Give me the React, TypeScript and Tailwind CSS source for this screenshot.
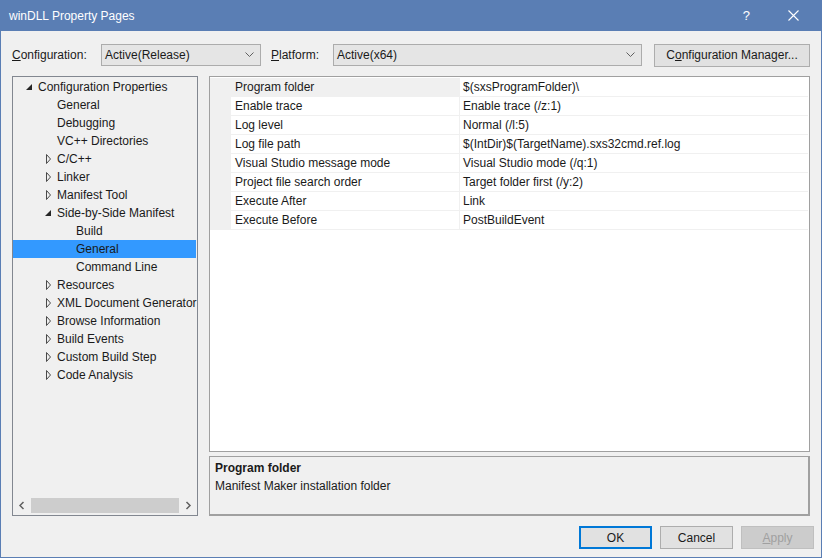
import { ReactNode } from "react";

type TreeNode = {
  label: string;
  level: number;
  arrow?: "open" | "closed";
  selected?: boolean;
};

const treeNodes: TreeNode[] = [
  { label: "Configuration Properties", level: 0, arrow: "open" },
  { label: "General", level: 1 },
  { label: "Debugging", level: 1 },
  { label: "VC++ Directories", level: 1 },
  { label: "C/C++", level: 1, arrow: "closed" },
  { label: "Linker", level: 1, arrow: "closed" },
  { label: "Manifest Tool", level: 1, arrow: "closed" },
  { label: "Side-by-Side Manifest", level: 1, arrow: "open" },
  { label: "Build", level: 2 },
  { label: "General", level: 2, selected: true },
  { label: "Command Line", level: 2 },
  { label: "Resources", level: 1, arrow: "closed" },
  { label: "XML Document Generator", level: 1, arrow: "closed" },
  { label: "Browse Information", level: 1, arrow: "closed" },
  { label: "Build Events", level: 1, arrow: "closed" },
  { label: "Custom Build Step", level: 1, arrow: "closed" },
  { label: "Code Analysis", level: 1, arrow: "closed" },
];

const properties = [
  ["Program folder", "$(sxsProgramFolder)\\"],
  ["Enable trace", "Enable trace (/z:1)"],
  ["Log level", "Normal (/l:5)"],
  ["Log file path", "$(IntDir)$(TargetName).sxs32cmd.ref.log"],
  ["Visual Studio message mode", "Visual Studio mode (/q:1)"],
  ["Project file search order", "Target folder first (/y:2)"],
  ["Execute After", "Link"],
  ["Execute Before", "PostBuildEvent"],
];

const Arrow = ({ kind }: { kind: "open" | "closed" }) =>
  kind === "open" ? (
    <svg width="16" height="18" viewBox="0 0 16 18">
      <path d="M10 6 L10 12 L4 12 Z" fill="#262626" />
    </svg>
  ) : (
    <svg width="16" height="18" viewBox="0 0 16 18">
      <path d="M5.5 4.5 L9.5 9 L5.5 13.5 Z" fill="none" stroke="#4a4a4a" strokeWidth="1" />
    </svg>
  );

const Chevron = () => (
  <svg width="9" height="6" viewBox="0 0 9 6">
    <path d="M0.5 0.5 L4.5 4.5 L8.5 0.5" fill="none" stroke="#606060" strokeWidth="1" />
  </svg>
);

const Combo = ({ value, width }: { value: string; width: string }) => (
  <div
    className={`${width} h-[22px] flex items-center justify-between border border-[#acacac] bg-[#e5e5e5] pl-[3px] pr-[6px]`}
  >
    <span>{value}</span>
    <Chevron />
  </div>
);

const Button = ({ children, className }: { children: ReactNode; className: string }) => (
  <div className={`h-[23px] flex items-center justify-center ${className}`}>{children}</div>
);

export default function App() {
  return (
    <div
      className="w-[822px] h-[558px] bg-[#f0f0f0] border border-t-0 border-[#5a7eb4] flex flex-col text-[12px] text-[#1a1a1a] overflow-hidden"
      style={{ fontFamily: '"Liberation Sans", Arial, sans-serif' }}
    >
      {/* title bar */}
      <div className="h-[31px] bg-[#5a7eb4] flex items-center text-white -mx-px px-[9px] shrink-0">
        <span className="text-[12px]">winDLL Property Pages</span>
        <span className="ml-auto mr-[38px] text-[13px]">?</span>
        <svg width="11" height="11" viewBox="0 0 11 11" className="mr-[14px]">
          <path d="M0.5 0.5 L10.5 10.5 M10.5 0.5 L0.5 10.5" stroke="white" strokeWidth="1.1" />
        </svg>
      </div>

      {/* configuration row */}
      <div className="flex items-center mt-[13px] pl-[11px] pr-[11px] h-[22px] shrink-0">
        <span className="w-[89px]">
          <span className="underline">C</span>onfiguration:
        </span>
        <Combo value="Active(Release)" width="w-[160px]" />
        <span className="ml-[10px] w-[62px]">
          <span className="underline">P</span>latform:
        </span>
        <Combo value="Active(x64)" width="w-[309px]" />
        <Button className="ml-[12px] w-[156px] h-[22px] border border-[#adadad] bg-[#e1e1e1]">
          <span>
            C<span className="underline">o</span>nfiguration Manager...
          </span>
        </Button>
      </div>

      {/* main panels */}
      <div className="flex mt-[10px] pl-[11px] pr-[11px] h-[440px] gap-[11px] shrink-0">
        {/* tree */}
        <div className="w-[186px] border border-[#828790] bg-[#f0f0f0] flex flex-col">
          <div className="flex-1 pt-px">
            {treeNodes.map((n, i) => (
              <div
                key={i}
                className={`h-[18px] flex items-center whitespace-nowrap ${n.selected ? "bg-[#3399ff] mr-px" : ""}`}
                style={{ paddingLeft: 9 + n.level * 19 }}
              >
                <span className="w-[16px] h-[18px] shrink-0">{n.arrow && <Arrow kind={n.arrow} />}</span>
                <span>{n.label}</span>
              </div>
            ))}
          </div>
          <div className="h-[17px] flex items-center bg-[#f0f0f0] mb-[1px]">
            <svg width="18" height="17" viewBox="0 0 18 17">
              <path d="M10.5 5 L7 8.5 L10.5 12" fill="none" stroke="#606060" strokeWidth="1.5" />
            </svg>
            <div className="flex-1 h-[15px] bg-[#cdcdcd]" />
            <svg width="18" height="17" viewBox="0 0 18 17">
              <path d="M7.5 5 L11 8.5 L7.5 12" fill="none" stroke="#606060" strokeWidth="1.5" />
            </svg>
          </div>
        </div>

        {/* right side */}
        <div className="flex-1 flex flex-col gap-[4px]">
          <div className="h-[377px] border border-[#a0a0a0] bg-white">
            {properties.map(([name, value], i) => (
              <div
                key={i}
                className={`h-[19px] flex border-b border-[#f0f0f0] mr-[1px] ${i === 0 ? "mt-px" : ""}`}
              >
                <div className="w-[21px] bg-[#f0f0f0] shrink-0" />
                <div
                  className={`w-[229px] pl-[4px] flex items-center border-r border-[#f0f0f0] ${i === 0 ? "bg-[#f0f0f0]" : ""}`}
                >
                  {name}
                </div>
                <div className="flex-1 pl-[3px] flex items-center">{value}</div>
              </div>
            ))}
          </div>
          <div className="h-[60px] border border-[#a0a0a0] border-b-2 border-r-2 bg-[#f0f0f0] px-[5px] pt-[2px] leading-[18px]">
            <div className="font-bold">Program folder</div>
            <div>Manifest Maker installation folder</div>
          </div>
        </div>
      </div>

      {/* buttons */}
      <div className="flex justify-end gap-[8px] mt-[10px] pr-[7px] shrink-0">
        <Button className="w-[73px] border-2 border-[#0078d7] bg-[#e1e1e1]">OK</Button>
        <Button className="w-[73px] border border-[#adadad] bg-[#e1e1e1]">Cancel</Button>
        <Button className="w-[73px] border border-[#bfbfbf] bg-[#cccccc] text-[#a0a0a0]">
          <span>
            <span className="underline">A</span>pply
          </span>
        </Button>
      </div>
    </div>
  );
}
